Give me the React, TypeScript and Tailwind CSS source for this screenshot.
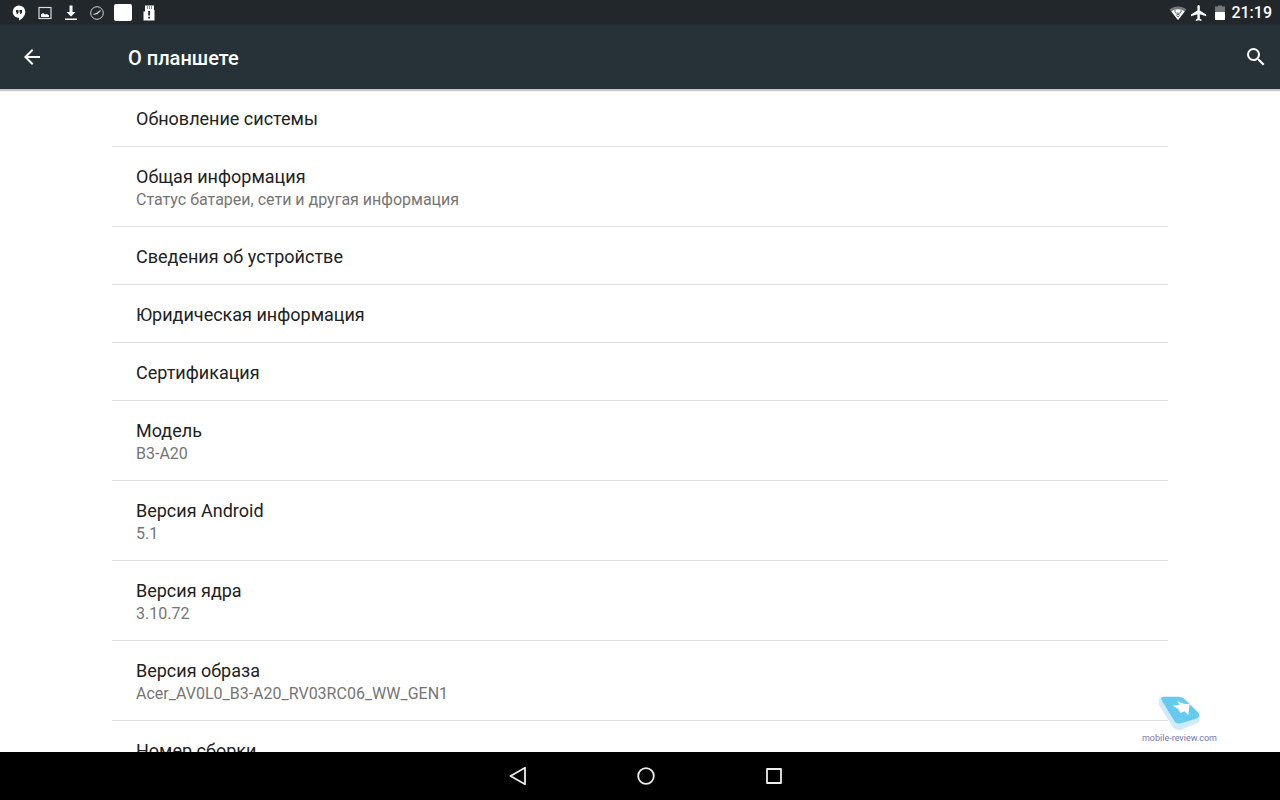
import React from 'react';

interface Preference {
  title: string;
  summary?: string;
}

const preferences: Preference[] = [
  { title: 'Обновление системы' },
  { title: 'Общая информация', summary: 'Статус батареи, сети и другая информация' },
  { title: 'Сведения об устройстве' },
  { title: 'Юридическая информация' },
  { title: 'Сертификация' },
  { title: 'Модель', summary: 'B3-A20' },
  { title: 'Версия Android', summary: '5.1' },
  { title: 'Версия ядра', summary: '3.10.72' },
  { title: 'Версия образа', summary: 'Acer_AV0L0_B3-A20_RV03RC06_WW_GEN1' },
  { title: 'Номер сборки' },
];

function StatusSlot({ children }: { children: React.ReactNode }) {
  return <span className="flex w-[26px] items-center justify-center">{children}</span>;
}

function StatusBar() {
  return (
    <div className="flex h-[25px] shrink-0 items-center justify-between bg-[#21272b] pr-2 pl-1.5 text-white">
      <div className="flex items-center">
        {/* Hangouts */}
        <StatusSlot>
          <svg className="h-4 w-4" viewBox="0 0 16 16">
            <path
              fill="#fff"
              d="M8 .5a6.300 6.300 0 0 0-6.300 6.300c0 3.300 2.700 6 6.300 6v2.800c3.600-1.800 6.300-5.200 6.300-8.800A6.300 6.300 0 0 0 8 .5z"
            />
            <path fill="#21272b" d="M5 5h2.500v2.600L6.500 9H5.400l.6-1.500H5zM8.500 5H11v2.600L10 9H8.900l.6-1.500h-1z" />
          </svg>
        </StatusSlot>
        {/* Screenshot */}
        <StatusSlot>
          <svg className="h-4 w-4" viewBox="0 0 16 16">
            <rect x="2" y="2.500" width="12" height="11" fill="none" stroke="#d8dadb" strokeWidth="1.200" />
            <path fill="#fff" d="M4 12V9.500L6 8l2 1.500L10 9l2 1.500V12z" />
          </svg>
        </StatusSlot>
        {/* Download */}
        <StatusSlot>
          <svg className="h-4 w-4" viewBox="0 0 16 16">
            <path fill="#fff" d="M6.500 .5h3v6.500h3l-4.500 4.500L3.500 7h3zM2 13.500h12V15H2z" />
          </svg>
        </StatusSlot>
        {/* Speed test */}
        <StatusSlot>
          <svg className="h-4 w-4" viewBox="0 0 16 16" fill="none" stroke="#cfd2d3">
            <circle cx="8" cy="8" r="6.300" />
            <path strokeWidth="1.300" d="M4.500 9.500 8 8.300 11.500 5.500M8 8.300l1 .2" />
          </svg>
        </StatusSlot>
        <StatusSlot>
          <span className="h-[17px] w-[18px] rounded-xs bg-white" />
        </StatusSlot>
        {/* SD card warning */}
        <StatusSlot>
          <svg className="h-4 w-4" viewBox="0 0 16 16">
            <path fill="#fff" d="M4 .5h9v4.500h.5v10.500h-11V6.500H4z" />
            <path stroke="#8b8f92" d="M6.500 1v3M8.500 1v3M10.500 1v3" />
            <path fill="#21272b" d="M7.200 6h1.800v4.500H7.200zM7.200 11.700h1.800v1.800H7.200z" />
          </svg>
        </StatusSlot>
      </div>

      <div className="flex items-center gap-1">
        {/* Wi-Fi */}
        <svg className="h-4 w-[18px]" viewBox="0 0 18 16">
          <path fill="#73787b" d="M9 15 .5 4.300C5.500.4 12.500.4 17.500 4.300z" />
          <path fill="#fff" d="M9 15 2.300 6.500c4-3 9.400-3 13.400 0z" />
          <path fill="none" stroke="#5b6164" d="M6 5v2M12 5v2M6 7.500c1.500 1 4.500 1 6 0M7 10.500c1-1.300 3-1.300 4 0M8 11.500h2" />
        </svg>
        {/* Airplane mode */}
        <svg className="h-4 w-4" viewBox="2 2 20 20">
          <path
            fill="#fff"
            d="M21 16v-2l-8-5V3.500a1.500 1.500 0 0 0-3 0V9l-8 5v2l8-2.500V19l-2 1.500V22l3.500-1 3.500 1v-1.500L13 19v-5.500z"
          />
        </svg>
        {/* Battery */}
        <svg className="ml-1 h-4 w-2.5" viewBox="0 0 10 16">
          <path fill="#73787b" d="M3 .5h4v1h3v5.500H0V1.500h3z" />
          <path fill="#fff" d="M0 7h10v8H0z" />
        </svg>
        <span className="ml-0.5 text-base leading-6 font-medium">21:19</span>
      </div>
    </div>
  );
}

function AppBar() {
  return (
    <header className="relative z-10 flex h-16 shrink-0 items-center bg-[#263238] text-white shadow-[0_2px_1px_rgba(0,0,0,0.22)]">
      <button type="button" aria-label="Назад" className="flex h-16 w-16 items-center justify-center">
        <svg className="h-6 w-6" viewBox="0 0 24 24" fill="currentColor">
          <path d="M20 11H7.830l5.590-5.590L12 4l-8 8 8 8 1.410-1.410L7.830 13H20z" />
        </svg>
      </button>
      <h1 className="ml-16 flex-1 pt-0.5 text-xl font-medium">О планшете</h1>
      <button type="button" aria-label="Поиск" className="flex h-16 w-12 items-center justify-center">
        <svg className="h-6 w-6" viewBox="0 0 24 24" fill="currentColor">
          <path d="M15.500 14h-.79l-.28-.27A6.470 6.470 0 0 0 16 9.500 6.500 6.500 0 1 0 9.500 16c1.610 0 3.090-.59 4.230-1.570l.27.28v.79l5 4.990L20.490 19zm-6 0a4.500 4.500 0 1 1 0-9 4.500 4.500 0 0 1 0 9z" />
        </svg>
      </button>
    </header>
  );
}

function PreferenceRow({ title, summary }: Preference) {
  return (
    <li className="border-b border-[#dedede]">
      <button type="button" className="block w-full px-6 pt-[18px] pb-[15px] text-left">
        <span className="block text-lg leading-6 text-[#212121]">{title}</span>
        {summary && <span className="block text-base leading-[22px] text-[#757575]">{summary}</span>}
      </button>
    </li>
  );
}

function Watermark() {
  return (
    <div className="pointer-events-none absolute right-[63px] bottom-[7px] flex flex-col items-center">
      <svg className="h-[35px] w-[42px]" viewBox="94 35 126 105">
        <path fill="#cfeaf8" d="M104 38Q94 40 97 62L138 128Q148 140 162 136L212 116Q220 112 219 94z" />
        <path fill="#66caef" d="M110 37H158Q165 37 171 42L214 84Q224 97 208 103L162 117Q150 120 143 110L107 51Q99 37 110 37z" />
        <path fill="#fff" d="M138 64 158 62 152 50 171 58 189 60 185 92 173 81 162 86 152 72z" />
      </svg>
      <span className="text-[9px] leading-[14px] text-[#7478ab]">mobile-review.com</span>
    </div>
  );
}

function NavigationBar() {
  return (
    <nav className="flex h-12 shrink-0 items-center justify-center gap-20 bg-black pl-3">
      <button type="button" aria-label="Назад" className="flex h-12 w-12 items-center justify-center">
        <svg className="h-6 w-6" viewBox="0 0 24 24" fill="none" stroke="#eee" strokeWidth="1.800" strokeLinejoin="round">
          <path d="M19 3.800v16.400L4.500 12z" />
        </svg>
      </button>
      <button type="button" aria-label="Домой" className="flex h-12 w-12 items-center justify-center">
        <svg className="h-6 w-6" viewBox="0 0 24 24" fill="none" stroke="#eee" strokeWidth="1.800">
          <circle cx="12" cy="12" r="7.800" />
        </svg>
      </button>
      <button type="button" aria-label="Обзор" className="flex h-12 w-12 items-center justify-center">
        <svg className="h-6 w-6" viewBox="0 0 24 24" fill="none" stroke="#eee" strokeWidth="1.800" strokeLinejoin="round">
          <rect x="5" y="5" width="14" height="14" />
        </svg>
      </button>
    </nav>
  );
}

export default function App() {
  return (
    <div className="flex h-screen flex-col bg-white font-[Roboto,sans-serif]">
      <StatusBar />
      <AppBar />
      <main className="relative flex min-h-0 flex-1 flex-col">
        <div className="min-h-0 flex-1 overflow-y-auto px-28 [scrollbar-width:none]">
          <ul>
            {preferences.map((pref) => (
              <PreferenceRow key={pref.title} {...pref} />
            ))}
          </ul>
        </div>
        <Watermark />
      </main>
      <NavigationBar />
    </div>
  );
}
